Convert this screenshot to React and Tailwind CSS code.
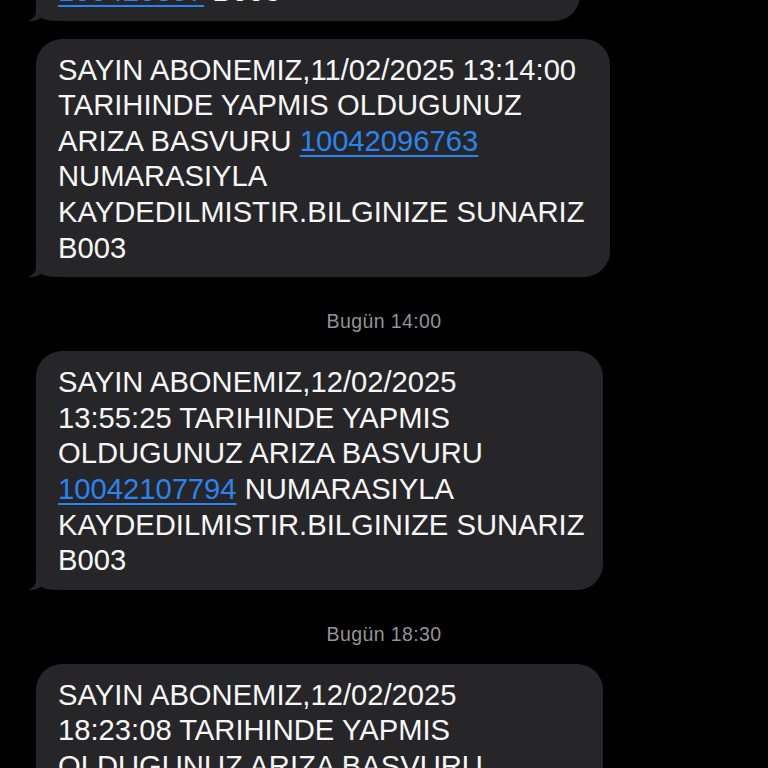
const link = 'text-[#2a84f0] underline decoration-[1.5px] underline-offset-[4px]';

const messages = [
  {
    id: 'm1',
    width: 'w-[544px]',
    lines: [
      <>
        <span className={link}>100420857</span> B003
      </>,
    ],
  },
  {
    id: 'm2',
    width: 'w-[574px]',
    lines: [
      'SAYIN ABONEMIZ,11/02/2025 13:14:00',
      'TARIHINDE YAPMIS OLDUGUNUZ',
      <>
        ARIZA BASVURU <span className={link}>10042096763</span>
      </>,
      'NUMARASIYLA',
      'KAYDEDILMISTIR.BILGINIZE SUNARIZ',
      'B003',
    ],
  },
  { id: 't1', stamp: 'Bugün 14:00' },
  {
    id: 'm3',
    width: 'w-[567px]',
    lines: [
      'SAYIN ABONEMIZ,12/02/2025',
      '13:55:25 TARIHINDE YAPMIS',
      'OLDUGUNUZ ARIZA BASVURU',
      <>
        <span className={link}>10042107794</span> NUMARASIYLA
      </>,
      'KAYDEDILMISTIR.BILGINIZE SUNARIZ',
      'B003',
    ],
  },
  { id: 't2', stamp: 'Bugün 18:30' },
  {
    id: 'm4',
    width: 'w-[567px]',
    lines: [
      'SAYIN ABONEMIZ,12/02/2025',
      '18:23:08 TARIHINDE YAPMIS',
      'OLDUGUNUZ ARIZA BASVURU',
      <>
        <span className={link}>10042118530</span> NUMARASIYLA
      </>,
      'KAYDEDILMISTIR.BILGINIZE SUNARIZ',
      'B003',
    ],
  },
];

function Tail() {
  return (
    <svg
      className="absolute left-[-8px] bottom-0"
      width="30"
      height="24"
      viewBox="0 0 30 24"
    >
      <path
        d="M8 0 L8 14 C8 19 4.5 22.5 0 24 C5 24.6 10 23 13.5 20.5 C17 23.2 22 24 30 24 L30 0 Z"
        fill="#262628"
      />
    </svg>
  );
}

function Bubble({ width, lines }) {
  return (
    <div className={`relative ${width} rounded-[26px] bg-[#262628] pl-[22px] pr-[20px] pt-[14px] pb-[11px]`}>
      <Tail />
      <div className="relative text-[29.2px] leading-[35.6px] text-[#f7f7f7] whitespace-nowrap">
        {lines.map((line, i) => (
          <div key={i}>{line}</div>
        ))}
      </div>
    </div>
  );
}

export default function App() {
  return (
    <div
      className="h-[768px] w-[768px] overflow-hidden bg-black"
      style={{ fontFamily: '"Liberation Sans", Arial, sans-serif' }}
    >
      <div className="flex flex-col pl-[36px] mt-[-40px]">
        {messages.map((m, i) =>
          m.stamp ? (
            <div
              key={m.id}
              className="mt-[32px] mb-[18px] -ml-[36px] text-center text-[19.5px] leading-[24px] tracking-[0.4px] text-[#939398]"
            >
              {m.stamp}
            </div>
          ) : (
            <div key={m.id} className={i > 0 && !messages[i - 1].stamp ? 'mt-[18px]' : ''}>
              <Bubble width={m.width} lines={m.lines} />
            </div>
          )
        )}
      </div>
    </div>
  );
}
